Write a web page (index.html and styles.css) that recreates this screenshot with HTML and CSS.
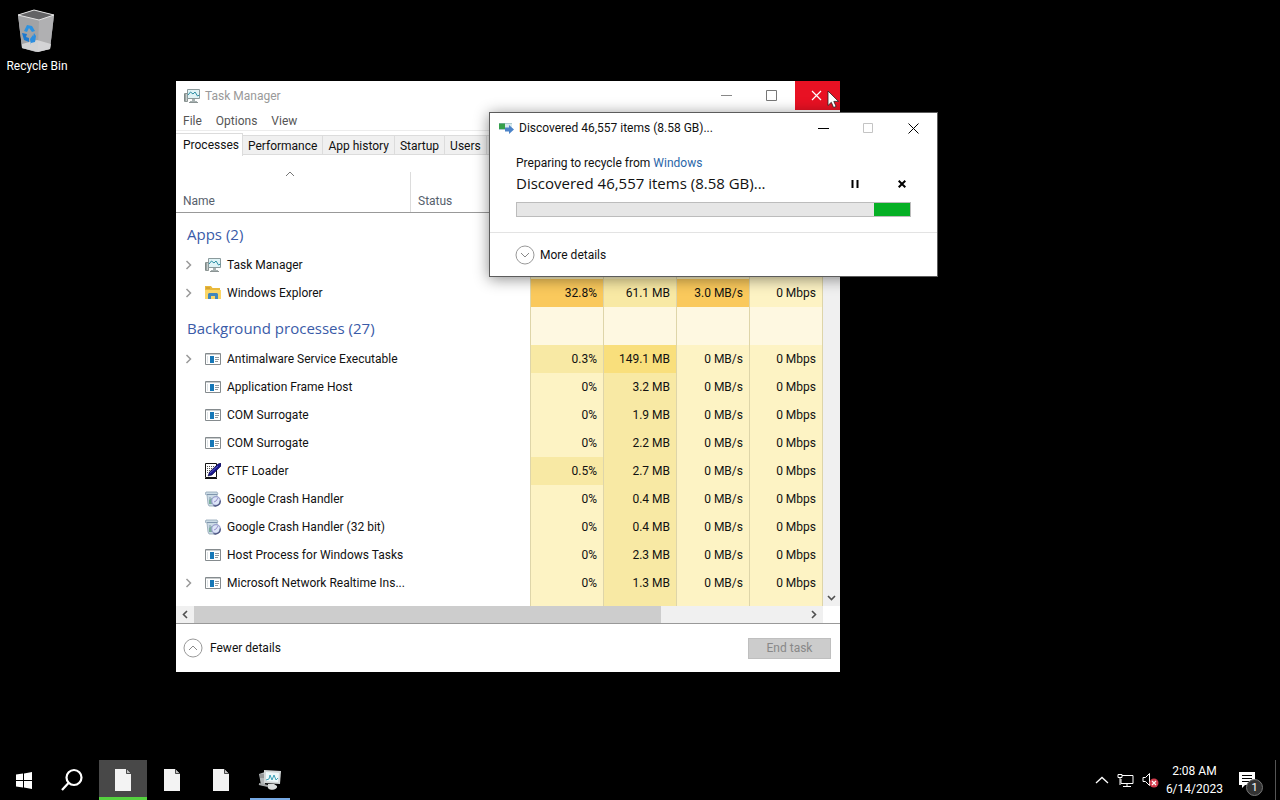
FILE: index.html
```html
<!DOCTYPE html>
<html lang="en">
<head>
<meta charset="utf-8">
<title>Desktop</title>
<link rel="stylesheet" href="styles.css">
</head>
<body>
<svg class="sprite" aria-hidden="true">
  <symbol id="chev-right" viewBox="0 0 8 10"><path d="M1.500 1l4 4-4 4" fill="none" stroke="#999" stroke-width="1.500"/></symbol>
  <symbol id="tm" viewBox="0 0 16 16">
    <path d="M.5 5.500h3v8h-3z" fill="#c9cfce" stroke="#8d9694"/><path d="M1 6v7" stroke="#6f7a78"/>
    <path d="M3.500 1.500h12v9h-12z" fill="#dff3f6" stroke="#8b9a9c"/>
    <path d="M4 7l2.500-3 2.500 2 2-2 2.500 4 2-1" fill="none" stroke="#2d8fa5"/>
    <path d="M8 11h3v2h2v2H6v-2h2z" fill="#a8b2b2"/><path d="M5 14.500h9" stroke="#8b9494"/>
  </symbol>
  <symbol id="folder" viewBox="0 0 16 16">
    <path d="M0 1h6l1.500 2H15v11H0z" fill="#e9b93c"/><path d="M0 5h16v9H0z" fill="#fbd667"/>
    <path d="M3 14V9l1-1h8l1 1v5h-3v-3H6v3z" fill="#4287bd"/><path d="M1 3h4" stroke="#c5902a"/>
  </symbol>
  <symbol id="app" viewBox="0 0 16 16">
    <path d="M.5 2.500h15v11H.5z" fill="#fff" stroke="#858b8e"/><path d="M1 3.500h14" stroke="#c7cbcd"/>
    <path d="M5 5h4v7H5z" fill="#1677b7"/><path d="M2.500 5v7" stroke="#dde3e6"/>
    <path d="M10 6.500h4M10 8.500h4M10 10.500h3" stroke="#92999e"/>
  </symbol>
  <symbol id="ctf" viewBox="0 0 16 16">
    <path d="M.5.5h11v14H.5z" fill="#fff" stroke="#111"/><path d="M0 15.500h12" stroke="#111"/>
    <path d="M2 3.500h9M2 5.500h7M2 7.500h6M2 9.500h4" stroke="#555" stroke-dasharray="1 1"/>
    <path d="M3 13l1.500-4L13 1l3-1v3l-9 9z" fill="#17158c" stroke="#0a0a3c" stroke-width=".6"/>
    <path d="M5 10l8-7" stroke="#6467cf" stroke-width=".8"/>
  </symbol>
  <symbol id="crash" viewBox="0 0 16 16">
    <path d="M1 1h11l1 2-1 1v9l-1 2H4l-1-2L2 4 0 3z" fill="#cbdbe5" stroke="#91a5b6" stroke-width=".8"/>
    <path d="M2 3.500h10M5 6v7" stroke="#8095ad"/><path d="M4 9l3-2v6H4z" fill="#7bad9c"/>
    <circle cx="11" cy="10" r="4.300" fill="#dce5f7" stroke="#9aa0cc" stroke-width="1.200"/>
    <path d="M11 10l2-3M11 10l-2 1" stroke="#9a8fca"/><path d="M8.500 14.500c3.500 1.500 7-1 6.800-5" fill="none" stroke="#4e5782" stroke-width="1.300"/>
  </symbol>
  <symbol id="page" viewBox="0 0 16 22">
    <path d="M0 0h11l5 5v17H0z" fill="#f3f3f3"/><path d="M11 0v5h5z" fill="#c4c4c4"/><path d="M11.500 0v4.500H16" fill="none" stroke="#4a4a4a"/>
  </symbol>
</svg>

<main class="desktop">
  <button class="shortcut">
    <svg width="42" height="46" viewBox="0 0 42 46">
      <path d="M2 6L18 1l20 5-4 34-14 3-14-4z" fill="#a9a9ab"/>
      <path d="M2 6L18 1l20 5-15 5z" fill="#636365"/>
      <path d="M2 6l21 5-1 32-16-4z" fill="#a2a3a5"/><path d="M23 11l15-5-4 34-12 3z" fill="#b0b0b2"/>
      <path d="M6 35l15-4 14 4-1 5-12 3-16-4z" fill="#dddddf" fill-opacity=".8"/>
      <path d="M2 6L18 1l20 5-15 5z" fill="none" stroke="#e2e2e2"/>
      <path d="M8 22l3-6 5 1 3 5-3 1-3-4-2 4z" fill="#2d92e0"/>
      <path d="M6 24l5 1-1 3 3 1v4l-5-2z" fill="#1b78cf"/>
      <path d="M14 30l3-4v2l1-4 2 3-1 6-4 1v2z" fill="#2b8ee0"/>
    </svg>
    <span>Recycle Bin</span>
  </button>

  <section class="window manager" aria-label="Task Manager">
    <header class="titlebar">
      <svg width="16" height="16"><use href="#tm"/></svg>
      <span class="title">Task Manager</span>
      <button class="caption" aria-label="Minimize"><svg width="11" height="11"><path d="M0 5.500h11" stroke="#888"/></svg></button>
      <button class="caption" aria-label="Maximize"><svg width="11" height="11"><path d="M.5.5h10v10H.5z" fill="none" stroke="#777"/></svg></button>
      <button class="caption close" aria-label="Close"><svg width="11" height="11"><path d="M1 1l9 9M10 1l-9 9" stroke="#fff" stroke-width="1.200"/></svg></button>
    </header>
    <nav class="menu"><button>File</button><button>Options</button><button>View</button></nav>
    <nav class="tabs"><button class="active">Processes</button><button>Performance</button><button>App history</button><button>Startup</button><button>Users</button><button aria-label="More tabs"></button></nav>
    <div class="list">
      <table>
        <colgroup><col class="c-name"><col class="c-status"><col class="c-val"><col class="c-val"><col class="c-val"><col class="c-last"></colgroup>
        <thead><tr><th class="sorted"><svg width="10" height="6"><path d="M1 5l4-4 4 4" fill="none" stroke="#777"/></svg><span>Name</span></th><th><span>Status</span></th><th></th><th></th><th></th><th></th></tr></thead>
        <tbody>
          <tr class="group"><th colspan="2">Apps (2)</th><td></td><td></td><td></td><td></td></tr>
          <tr><th colspan="2"><div class="proc"><svg class="tw"><use href="#chev-right"/></svg><svg class="ic"><use href="#tm"/></svg>Task Manager</div></th><td></td><td></td><td></td><td></td></tr>
          <tr><th colspan="2"><div class="proc"><svg class="tw"><use href="#chev-right"/></svg><svg class="ic"><use href="#folder"/></svg>Windows Explorer</div></th><td class="h4">32.8%</td><td class="h1">61.1 MB</td><td class="h4">3.0 MB/s</td><td>0 Mbps</td></tr>
          <tr class="group"><th colspan="2">Background processes (27)</th><td></td><td></td><td></td><td></td></tr>
          <tr><th colspan="2"><div class="proc"><svg class="tw"><use href="#chev-right"/></svg><svg class="ic"><use href="#app"/></svg>Antimalware Service Executable</div></th><td class="h1">0.3%</td><td class="h2">149.1 MB</td><td>0 MB/s</td><td>0 Mbps</td></tr>
          <tr><th colspan="2"><div class="proc"><span class="tw"></span><svg class="ic"><use href="#app"/></svg>Application Frame Host</div></th><td>0%</td><td class="h1">3.2 MB</td><td>0 MB/s</td><td>0 Mbps</td></tr>
          <tr><th colspan="2"><div class="proc"><span class="tw"></span><svg class="ic"><use href="#app"/></svg>COM Surrogate</div></th><td>0%</td><td class="h1">1.9 MB</td><td>0 MB/s</td><td>0 Mbps</td></tr>
          <tr><th colspan="2"><div class="proc"><span class="tw"></span><svg class="ic"><use href="#app"/></svg>COM Surrogate</div></th><td>0%</td><td class="h1">2.2 MB</td><td>0 MB/s</td><td>0 Mbps</td></tr>
          <tr><th colspan="2"><div class="proc"><span class="tw"></span><svg class="ic"><use href="#ctf"/></svg>CTF Loader</div></th><td class="h1">0.5%</td><td class="h1">2.7 MB</td><td>0 MB/s</td><td>0 Mbps</td></tr>
          <tr><th colspan="2"><div class="proc"><span class="tw"></span><svg class="ic"><use href="#crash"/></svg>Google Crash Handler</div></th><td>0%</td><td class="h1">0.4 MB</td><td>0 MB/s</td><td>0 Mbps</td></tr>
          <tr><th colspan="2"><div class="proc"><span class="tw"></span><svg class="ic"><use href="#crash"/></svg>Google Crash Handler (32 bit)</div></th><td>0%</td><td class="h1">0.4 MB</td><td>0 MB/s</td><td>0 Mbps</td></tr>
          <tr><th colspan="2"><div class="proc"><span class="tw"></span><svg class="ic"><use href="#app"/></svg>Host Process for Windows Tasks</div></th><td>0%</td><td class="h1">2.3 MB</td><td>0 MB/s</td><td>0 Mbps</td></tr>
          <tr><th colspan="2"><div class="proc"><svg class="tw"><use href="#chev-right"/></svg><svg class="ic"><use href="#app"/></svg>Microsoft Network Realtime Ins...</div></th><td>0%</td><td class="h1">1.3 MB</td><td>0 MB/s</td><td>0 Mbps</td></tr>
          <tr class="partial"><th colspan="2"></th><td></td><td class="h1"></td><td></td><td></td></tr>
        </tbody>
      </table>
      <div class="vscroll"><button aria-label="Scroll down"><svg width="9" height="6"><path d="M1 1l3.500 3.500L8 1" fill="none" stroke="#505050" stroke-width="1.600"/></svg></button></div>
    </div>
    <div class="hscroll">
      <button aria-label="Scroll left"><svg width="6" height="9"><path d="M5 1L1.500 4.500 5 8" fill="none" stroke="#505050" stroke-width="1.600"/></svg></button>
      <div class="track"><div class="thumb"></div></div>
      <button aria-label="Scroll right"><svg width="6" height="9"><path d="M1 1l3.500 3.500L1 8" fill="none" stroke="#505050" stroke-width="1.600"/></svg></button>
    </div>
    <footer class="foot">
      <button class="details"><svg width="20" height="20"><circle cx="10" cy="10" r="9" fill="none" stroke="#999"/><path d="M6 12l4-4 4 4" fill="none" stroke="#888"/></svg>Fewer details</button>
      <button class="end" disabled>End task</button>
    </footer>
  </section>

  <section class="window dialog" aria-label="Recycling progress">
    <header class="titlebar">
      <svg width="16" height="16"><path d="M1 3h13v7H1z" fill="#d6e9ef"/><path d="M1 3h6v6H1z" fill="#35a04b"/><path d="M1 3.500h13M1 9.500h8" stroke="#90b3b9" stroke-width=".6"/><path d="M7 7.500h4V5l5 4.500-5 4.500v-2.500H7z" fill="#4c83c8"/></svg>
      <span class="title">Discovered 46,557 items (8.58 GB)...</span>
      <button class="caption" aria-label="Minimize"><svg width="11" height="11"><path d="M0 5.500h11" stroke="#000"/></svg></button>
      <button class="caption" aria-label="Maximize" disabled><svg width="11" height="11"><path d="M.5.5h9v9h-9z" fill="none" stroke="#c4c4c4"/></svg></button>
      <button class="caption" aria-label="Close"><svg width="11" height="11"><path d="M.5.5l10 10M10.500.5l-10 10" stroke="#000"/></svg></button>
    </header>
    <div class="body">
      <p>Preparing to recycle from <a href="#">Windows</a></p>
      <div class="status"><h2>Discovered 46,557 items (8.58 GB)...</h2>
        <button aria-label="Pause"><svg width="8" height="8"><path d="M1.500 0v8M6.500 0v8" stroke="#000" stroke-width="2"/></svg></button>
        <button aria-label="Cancel"><svg width="8" height="8"><path d="M.7.7l6.600 6.600M7.300.7L.7 7.300" stroke="#000" stroke-width="2"/></svg></button>
      </div>
      <div class="bar" role="progressbar" aria-label="Progress"><div></div></div>
    </div>
    <div class="more"><button class="details"><svg width="20" height="20"><circle cx="10" cy="10" r="9" fill="none" stroke="#999"/><path d="M6 8l4 4 4-4" fill="none" stroke="#888"/></svg>More details</button></div>
  </section>

  <svg class="cursor" width="13" height="19" viewBox="0 0 13 19"><path d="M1 1v14.500l3.300-3.200 2.300 5.200 2.500-1.100-2.300-5h4.700z" fill="#fff" stroke="#222" stroke-width=".8"/></svg>
</main>

<footer class="taskbar">
  <button aria-label="Start"><svg width="16" height="17"><path d="M0 2.500L7 1.500v6.500H0zM8 1.400L16 0v8H8zM0 9h7v6.500l-7-1zM8 9h8v8l-8-1.400z" fill="#fff"/></svg></button>
  <button aria-label="Search"><svg width="24" height="24"><circle cx="14" cy="9.500" r="7.500" fill="none" stroke="#fff" stroke-width="2.200"/><path d="M8.500 15L2 22" stroke="#fff" stroke-width="2.200"/></svg></button>
  <div class="apps">
    <button class="current" aria-label="Document 1"><svg width="16" height="22"><use href="#page"/></svg></button>
    <button aria-label="Document 2"><svg width="16" height="22"><use href="#page"/></svg></button>
    <button aria-label="Document 3"><svg width="16" height="22"><use href="#page"/></svg></button>
    <button class="running" aria-label="Task Manager"><svg width="24" height="22"><path d="M1 5l6-2v14l-4-1z" fill="#b4b8b9"/><path d="M2 6h4M2 8h4" stroke="#777"/><path d="M6 1l17 1-1 13-16-1z" fill="#d4d8d9"/><path d="M8 3l13 1-1 9-12-1z" fill="#eef8f9"/><path d="M8 11l3-1 1-4 2 5 2-5 2 5 2-2" fill="none" stroke="#3aa0b6"/><path d="M10 15h6l3 2c1 5-11 5-9 0z" fill="#d9dcdc"/><path d="M1 15l9 2" stroke="#a4a8a9" stroke-width="2"/></svg></button>
  </div>
  <div class="tray">
    <button aria-label="Show hidden icons"><svg width="14" height="8"><path d="M1 7l6-5.500L13 7" fill="none" stroke="#fff" stroke-width="1.300"/></svg></button>
    <button aria-label="Network"><svg width="17" height="15"><path d="M5 2.500h11v8H4V6M10 11v3M6 13.500h8M1 1.500h4v3H1zM3 5v7" fill="none" stroke="#fff"/></svg></button>
    <button aria-label="Volume muted"><svg width="17" height="16"><path d="M1 5.500h2.500l4-4v12l-4-4H1z" fill="none" stroke="#fff"/><circle cx="12" cy="11" r="4.500" fill="#d13c4c"/><path d="M10 9l4 4M14 9l-4 4" stroke="#fff" stroke-width="1.200"/></svg></button>
    <time class="clock" datetime="2023-06-14T02:08">2:08 AM<br>6/14/2023</time>
    <button class="notes" aria-label="Notifications"><svg width="16" height="16"><path d="M0 0h16v13H6l-3 3v-3H0z" fill="#fff"/><path d="M3 3.500h10M3 6.500h10M3 9.500h7" stroke="#000"/></svg><span class="badge">1</span></button>
    <button class="peek" aria-label="Show desktop"></button>
  </div>
</footer>
</body>
</html>
```

FILE: styles.css
```css
* { box-sizing: border-box; }
body { margin: 0; min-height: 100vh; display: flex; flex-direction: column; background: #000; color: #111; font: 12px/16px "Segoe UI", Roboto, sans-serif; overflow: hidden; }
button { font: inherit; color: inherit; background: none; border: 0; padding: 0; }
svg { display: block; flex: none; }
p, h2 { margin: 0; font-weight: 400; }
.sprite { position: absolute; width: 0; height: 0; }

.desktop { flex: 1; position: relative; }
.shortcut { display: flex; flex-direction: column; align-items: center; gap: 3px; margin: 9px 0 0; width: 74px; color: #fff; }

.window { position: absolute; background: #fff; display: flex; flex-direction: column; }
.manager { left: 176px; top: 81px; width: 664px; }
.dialog { left: 489px; top: 112px; width: 449px; border: 1px solid #5c5c5c; box-shadow: 0 2px 14px rgba(0, 0, 0, .45); }
.cursor { position: absolute; left: 827px; top: 90px; }

.titlebar { display: flex; align-items: center; height: 29px; padding-left: 8px; }
.title { flex: 1; margin-left: 5px; color: #999; }
.caption { width: 45px; height: 100%; display: grid; place-items: center; }
.manager .caption { padding-right: 2px; }
.close { background: #e81123; }
.dialog .titlebar { height: 30px; padding-right: 1px; }
.dialog .title { color: #111; }

.menu { display: flex; gap: 14px; padding: 2px 7px 0; height: 21px; border-bottom: 1px solid #ececec; color: #555; }
.tabs { display: flex; align-items: flex-end; height: 25px; padding-top: 2px; }
.tabs button { height: 20px; padding: 1px 5px 0; background: #f0f0f0; border: 1px solid #dcdcdc; border-left: 0; margin-bottom: 1px; white-space: nowrap; }
.tabs button:last-child { width: 60px; }
.tabs .active { height: 23px; padding: 0 3px 1px 7px; margin-bottom: 0; background: #fff; border-bottom: 0; }

.list { display: flex; }
table { flex: 1; table-layout: fixed; border-collapse: separate; border-spacing: 0; }
.c-status { width: 119px; }
.c-val { width: 73px; }
.c-last { width: 74px; }
thead th { height: 57px; padding: 0 7px 3px; vertical-align: bottom; text-align: left; font-weight: 400; color: #56606c; border-bottom: 1px solid #999; }
.sorted { background: linear-gradient(#dcdcdc, #dcdcdc) right bottom / 1px 40px no-repeat; }
thead .sorted { padding-right: 14px; }
.sorted svg { margin: 0 auto 16px; }
tbody th { height: 28px; padding: 0; text-align: left; font-weight: 400; }
td { padding: 0 6px; text-align: right; background: #fdf3c4; border-left: 1px solid #ded5a9; white-space: nowrap; }
td:last-child { border-right: 1px solid #ded5a9; }
.h1 { background: #f8e9a4; }
.h2 { background: #f9df7c; }
.h4 { background: #fac95c; }
.group th { height: 38px; padding: 3px 11px 0; font-family: "Segoe UI", "Open Sans", sans-serif; font-size: 15px; color: #3a5ba8; }
.group td { background: #fef8e1; }
.partial th { height: 9px; }
.proc { display: flex; align-items: center; padding-left: 9px; white-space: nowrap; }
.tw { width: 8px; height: 10px; margin-right: 12px; }
.ic { width: 16px; height: 16px; margin-right: 6px; }
.vscroll { width: 17px; background: #f0f0f0; display: flex; align-items: flex-end; }
.vscroll button { width: 17px; height: 17px; display: grid; place-items: center; }
.hscroll { display: flex; height: 18px; padding-right: 17px; border-bottom: 1px solid #999; }
.hscroll button { width: 18px; background: #f0f0f0; display: grid; place-items: center; }
.track { flex: 1; background: #f0f0f0; }
.thumb { width: 76.5%; height: 100%; background: #cdcdcd; }
.foot { display: flex; justify-content: space-between; align-items: center; height: 48px; padding: 0 9px 0 7px; }
.details { display: flex; align-items: center; gap: 7px; }
.end { width: 83px; height: 21px; background: #ccc; border: 1px solid #bfbfbf; color: #888; }

.body { padding: 12px 26px 15px; }
.body a { color: #2a66a8; text-decoration: none; }
.status { display: flex; align-items: center; height: 26px; }
h2 { flex: 1; padding-bottom: 2px; font-family: "Segoe UI", "Open Sans", sans-serif; font-size: 15px; }
.status button { width: 20px; height: 20px; margin-left: 27px; display: grid; place-items: center; }
.status button:last-child { margin-right: -1px; }
.bar { display: flex; justify-content: flex-end; height: 15px; margin-top: 5px; background: #e6e6e6; border: 1px solid #bcbcbc; }
.bar div { width: 36px; background: #06b025; }
.more { height: 44px; padding: 0 25px; border-top: 1px solid #e3e3e3; display: flex; align-items: center; }
.more .details { gap: 5px; }

.taskbar { display: flex; height: 40px; color: #fff; }
.taskbar > button, .apps button { width: 48px; display: grid; place-items: center; }
.apps { display: flex; gap: 1px; margin-left: 3px; }
.apps .current { background: linear-gradient(#55d13f, #55d13f) bottom / 100% 3px no-repeat #484848; }
.apps .running { background: linear-gradient(#76a9e4, #76a9e4) bottom / 40px 2px no-repeat; }
.tray { margin-left: auto; display: flex; align-items: center; gap: 8px; }
.clock { text-align: center; line-height: 18px; margin-left: -1px; }
.notes { position: relative; margin: 0 12px 0 8px; }
.badge { position: absolute; left: 7px; top: 7px; width: 17px; height: 17px; border-radius: 50%; background: #333; border: 1px solid #777; font-size: 11px; line-height: 15px; }
.peek { width: 5px; height: 40px; border-left: 1px solid #555; }
```
